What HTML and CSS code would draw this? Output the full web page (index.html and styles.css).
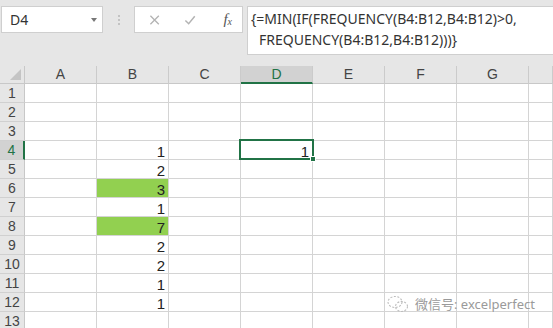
FILE: index.html
```html
<!DOCTYPE html>
<html>
<head>
<meta charset="utf-8">
<link rel="stylesheet" href="styles.css">
</head>
<body>
<div class="app">
  <div class="toolbar">
    <div class="namebox"><span class="name">D4</span><span class="caret"></span></div>
    <div class="grip"><i></i><i></i><i></i></div>
    <div class="fxbox">
      <svg class="ico" width="12" height="12" viewBox="0 0 12 12"><path d="M1.5 1.5 L10.5 10.5 M10.5 1.5 L1.5 10.5" stroke="#b3b3b3" stroke-width="1.4" fill="none"/></svg>
      <svg class="ico" width="13" height="12" viewBox="0 0 13 12"><path d="M1.5 6.5 L5 10 L11.5 2" stroke="#b3b3b3" stroke-width="1.6" fill="none"/></svg>
      <span class="fx">f<sub>x</sub></span>
    </div>
    <div class="formula">
      <div>{=MIN(IF(FREQUENCY(B4:B12,B4:B12)&gt;0,</div>
      <div class="l2">FREQUENCY(B4:B12,B4:B12)))}</div>
    </div>
  </div>
  <div class="grid">
    <div class="corner"><span class="tri"></span></div>
    <div class="ch">A</div><div class="ch">B</div><div class="ch">C</div><div class="ch sel">D</div><div class="ch">E</div><div class="ch">F</div><div class="ch">G</div><div class="ch"></div>

    <div class="rh">1</div><div class="c"></div><div class="c"></div><div class="c"></div><div class="c"></div><div class="c"></div><div class="c"></div><div class="c"></div><div class="c"></div>
    <div class="rh">2</div><div class="c"></div><div class="c"></div><div class="c"></div><div class="c"></div><div class="c"></div><div class="c"></div><div class="c"></div><div class="c"></div>
    <div class="rh">3</div><div class="c"></div><div class="c"></div><div class="c"></div><div class="c"></div><div class="c"></div><div class="c"></div><div class="c"></div><div class="c"></div>
    <div class="rh sel">4</div><div class="c"></div><div class="c">1</div><div class="c"></div><div class="c active">1<span class="selbox"><span class="handle"></span></span></div><div class="c"></div><div class="c"></div><div class="c"></div><div class="c"></div>
    <div class="rh">5</div><div class="c"></div><div class="c">2</div><div class="c"></div><div class="c"></div><div class="c"></div><div class="c"></div><div class="c"></div><div class="c"></div>
    <div class="rh">6</div><div class="c"></div><div class="c hl">3</div><div class="c"></div><div class="c"></div><div class="c"></div><div class="c"></div><div class="c"></div><div class="c"></div>
    <div class="rh">7</div><div class="c"></div><div class="c">1</div><div class="c"></div><div class="c"></div><div class="c"></div><div class="c"></div><div class="c"></div><div class="c"></div>
    <div class="rh">8</div><div class="c"></div><div class="c hl">7</div><div class="c"></div><div class="c"></div><div class="c"></div><div class="c"></div><div class="c"></div><div class="c"></div>
    <div class="rh">9</div><div class="c"></div><div class="c">2</div><div class="c"></div><div class="c"></div><div class="c"></div><div class="c"></div><div class="c"></div><div class="c"></div>
    <div class="rh">10</div><div class="c"></div><div class="c">2</div><div class="c"></div><div class="c"></div><div class="c"></div><div class="c"></div><div class="c"></div><div class="c"></div>
    <div class="rh">11</div><div class="c"></div><div class="c">1</div><div class="c"></div><div class="c"></div><div class="c"></div><div class="c"></div><div class="c"></div><div class="c"></div>
    <div class="rh">12</div><div class="c"></div><div class="c">1</div><div class="c"></div><div class="c"></div><div class="c"></div><div class="c"></div><div class="c"></div><div class="c"></div>
    <div class="rh">13</div><div class="c"></div><div class="c"></div><div class="c"></div><div class="c"></div><div class="c"></div><div class="c"></div><div class="c"></div><div class="c"></div>
  </div>
  <div class="watermark">
    <svg width="22" height="18" viewBox="0 0 22 18"><g fill="none" stroke="#bdbdbd" stroke-width="1.1" stroke-dasharray="2 1.5"><ellipse cx="8" cy="7" rx="7" ry="5.5"/><ellipse cx="14.5" cy="11.5" rx="6" ry="5"/></g></svg>
    <span>微信号: excelperfect</span>
  </div>
</div>
</body>
</html>
```

FILE: styles.css
```css
* { box-sizing: border-box; }
html, body { margin: 0; padding: 0; }
body {
  width: 553px;
  height: 328px;
  overflow: hidden;
  background: #e6e6e6;
  font-family: "Noto Sans", "Noto Sans CJK SC", sans-serif;
}
.app { position: relative; width: 553px; height: 328px; overflow: hidden; }

.toolbar {
  height: 66px;
  display: flex;
  align-items: flex-start;
  padding: 6px 0 0 1px;
  background: #e6e6e6;
}
.namebox {
  width: 102px;
  height: 27px;
  background: #fff;
  border: 1px solid #cfcfcf;
  display: flex;
  align-items: center;
  justify-content: space-between;
  padding: 0 5px 0 8px;
}
.name { font-size: 14px; color: #333; }
.caret {
  width: 0; height: 0;
  border-left: 3.5px solid transparent;
  border-right: 3.5px solid transparent;
  border-top: 4px solid #777;
}
.grip {
  width: 31px;
  height: 27px;
  display: flex;
  flex-direction: column;
  align-items: center;
  justify-content: center;
  gap: 2px;
}
.grip i { display: block; width: 2px; height: 2px; background: #c3c3c3; }
.fxbox {
  width: 109px;
  height: 27px;
  background: #fff;
  border: 1px solid #cfcfcf;
  display: flex;
  align-items: center;
  padding: 0 10px 0 14px;
  gap: 24px;
}
.ico { display: block; }
.fx {
  font-family: "Liberation Serif", serif;
  font-style: italic;
  font-size: 15px;
  color: #555;
  margin-left: 3px;
}
.fx sub { font-size: 10px; vertical-align: -1px; }
.formula {
  margin-left: 4px;
  flex: 1;
  height: 49px;
  background: #fff;
  border: 1px solid #cfcfcf;
  border-right: none;
  padding: 0 0 0 3px;
  font-size: 14px;
  line-height: 21px;
  color: #333;
  white-space: nowrap;
  padding-top: 1px;
}
.formula .l2 { padding-left: 8px; }

.grid {
  display: grid;
  grid-template-columns: 25px repeat(7, 72px) 24px;
  grid-template-rows: 18px repeat(13, 19px);
  background: #fff;
  font-family: "Liberation Sans", sans-serif;
}
.corner {
  background: #e6e6e6;
  border-right: 1px solid #c8c8c8;
  border-bottom: 1px solid #c8c8c8;
  position: relative;
}
.tri {
  position: absolute;
  right: 3px; bottom: 3px;
  width: 0; height: 0;
  border-left: 11px solid transparent;
  border-bottom: 11px solid #c4c4c4;
}
.ch {
  background: #e6e6e6;
  border-right: 1px solid #cbcbcb;
  border-bottom: 1px solid #c8c8c8;
  font-size: 14px;
  color: #444;
  text-align: center;
  line-height: 17px;
}
.ch.sel {
  background: #d2d2d2;
  color: #217346;
  border-bottom: 2px solid #217346;
}
.rh {
  background: #e6e6e6;
  border-right: 1px solid #c8c8c8;
  border-bottom: 1px solid #d0d0d0;
  font-size: 14px;
  color: #444;
  text-align: center;
  line-height: 19px;
}
.rh.sel {
  background: #d2d2d2;
  color: #217346;
  border-right: 2px solid #217346;
}
.c {
  border-right: 1px solid #d4d4d4;
  border-bottom: 1px solid #d4d4d4;
  font-size: 15px;
  color: #222;
  text-align: right;
  padding-right: 3px;
  line-height: 21px;
}
.c.hl { background: #92d050; }
.c.active { position: relative; }
.selbox {
  position: absolute;
  left: -2px; top: -2px;
  width: 75px; height: 21px;
  border: 2px solid #217346;
}
.handle {
  position: absolute;
  right: -4px; bottom: -4px;
  width: 6px; height: 6px;
  background: #217346;
  border: 1px solid #fff;
}
.watermark {
  position: absolute;
  left: 387px;
  top: 294px;
  display: flex;
  align-items: center;
  gap: 6px;
  font-size: 13px;
  color: #9a9a9a;
  text-shadow: 0 0 2px #fff;
}
.watermark svg { display: block; }
```
